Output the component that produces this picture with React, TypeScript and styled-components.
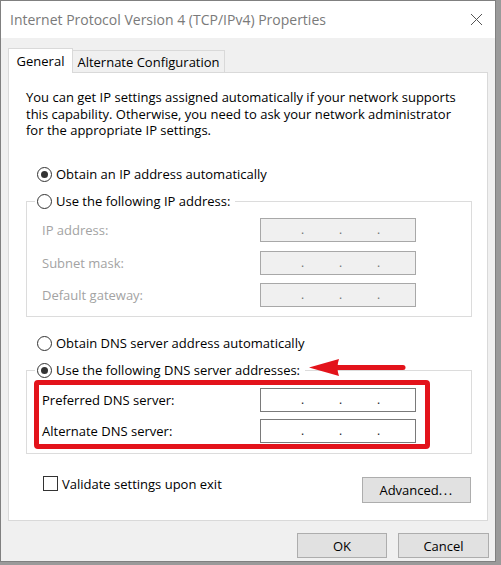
import React from 'react';
import styled, { createGlobalStyle } from 'styled-components';

const GlobalStyle = createGlobalStyle`
  html, body { margin: 0; padding: 0; background: #9a9a9a; }
  body {
    font-family: "Open Sans", "Noto Sans", sans-serif;
    font-size: 13px;
    color: #000;
  }
  * { box-sizing: border-box; }
`;

const Window = styled.div`
  width: 496px;
  height: 562px;
  background: #f0f0f0;
  border: 1px solid #808080;
  display: flex;
  flex-direction: column;
`;

const TitleBar = styled.div`
  height: 37px;
  flex: none;
  background: #fff;
  display: flex;
  align-items: center;
  justify-content: space-between;
  padding: 0 12px 0 9px;
`;

const Title = styled.div`
  font-size: 14px;
  color: #7a7a7a;
`;

const Body = styled.div`
  flex: 1;
  display: flex;
  flex-direction: column;
  padding: 10px 7px 4px 7px;
`;

const TabStrip = styled.div`
  display: flex;
  align-items: flex-end;
  height: 25px;
  margin-bottom: -1px;
  position: relative;
  z-index: 1;
`;

const Tab = styled.div<{ $active?: boolean; $w: number }>`
  width: ${(p) => p.$w}px;
  height: ${(p) => (p.$active ? 25 : 23)}px;
  margin-left: ${(p) => (p.$active ? 0 : -1)}px;
  background: ${(p) => (p.$active ? '#fff' : '#f0f0f0')};
  border: 1px solid #d9d9d9;
  border-bottom: ${(p) => (p.$active ? 'none' : '1px solid #d9d9d9')};
  display: flex;
  align-items: center;
  justify-content: center;
  font-size: 13px;
  color: #000;
  padding-bottom: ${(p) => (p.$active ? 1 : 0)}px;
`;

const Panel = styled.div`
  position: relative;
  background: #fff;
  border: 1px solid #d9d9d9;
  padding: 16px 15px 17px 17px;
  display: flex;
  flex-direction: column;
`;

const Intro = styled.p`
  margin: 0;
  line-height: 16.5px;
`;

const RadioRow = styled.div<{ $mt: number }>`
  display: flex;
  align-items: center;
  gap: 4px;
  height: 17px;
  padding-left: 11px;
  margin-top: ${(p) => p.$mt}px;
`;

const Radio = styled.span<{ $checked?: boolean }>`
  width: 15px;
  height: 15px;
  flex: none;
  border-radius: 50%;
  border: 1px solid #333;
  background: #fff;
  display: grid;
  place-items: center;
  &::after {
    content: '';
    width: 7px;
    height: 7px;
    border-radius: 50%;
    background: ${(p) => (p.$checked ? '#333' : 'transparent')};
  }
`;

const Group = styled.fieldset<{ $pt: number; $pb: number }>`
  margin: 10px 0 0 0;
  padding: ${(p) => p.$pt}px 0 ${(p) => p.$pb}px 15px;
  border: 1px solid #dcdcdc;
  min-width: 0;
`;

const Legend = styled.legend`
  margin-left: -7px;
  padding: 0 5px 0 2px;
  height: 17px;
  display: flex;
  align-items: center;
  gap: 4px;
`;

const Rows = styled.div<{ $gap: number }>`
  display: flex;
  flex-direction: column;
  gap: ${(p) => p.$gap}px;
`;

const FieldRow = styled.div`
  display: grid;
  grid-template-columns: 218px 156px;
  align-items: center;
  height: 24px;
`;

const FieldLabel = styled.span<{ $disabled?: boolean }>`
  color: ${(p) => (p.$disabled ? '#a3a3a3' : '#000')};
`;

const IpBox = styled.div<{ $disabled?: boolean }>`
  height: 24px;
  border: 1px solid ${(p) => (p.$disabled ? '#a8a8a8' : '#7a7a7a')};
  background: ${(p) => (p.$disabled ? '#f0f0f0' : '#fff')};
  display: flex;
  align-items: center;
  justify-content: space-evenly;
  padding-left: 5px;
  color: ${(p) => (p.$disabled ? '#707070' : '#222')};
  font-size: 12px;
`;

const Dot = styled.span`
  line-height: 1;
`;

const BottomRow = styled.div`
  margin-top: 22px;
  display: flex;
  justify-content: space-between;
  align-items: flex-start;
  padding-left: 17px;
  padding-right: 1px;
`;

const CheckLabel = styled.div`
  display: flex;
  align-items: center;
  gap: 4px;
  height: 15px;
`;

const CheckBox = styled.span`
  width: 15px;
  height: 15px;
  border: 1px solid #333;
  background: #fff;
  flex: none;
`;

const Button = styled.button<{ $w: number; $h: number }>`
  width: ${(p) => p.$w}px;
  height: ${(p) => p.$h}px;
  margin-top: 1px;
  background: #e1e1e1;
  border: 1px solid #adadad;
  border-radius: 0;
  font-family: inherit;
  font-size: 13px;
  color: #000;
  padding: 0;
  display: flex;
  align-items: center;
  justify-content: center;
`;

const Ellipsis = styled.span`
  letter-spacing: 1.5px;
`;

const Footer = styled.div`
  margin-top: 11px;
  display: flex;
  justify-content: flex-end;
  gap: 11px;
  margin-right: -1px;
`;

const Highlight = styled.div`
  position: absolute;
  left: 25px;
  top: 307px;
  width: 396px;
  height: 69px;
  border: 5px solid #e3131b;
  border-radius: 4px;
  pointer-events: none;
`;

const ArrowMark = styled.svg`
  position: absolute;
  left: 300px;
  top: 286px;
  width: 97px;
  height: 18px;
  pointer-events: none;
`;

const CloseIcon = () => (
  <svg width="13" height="13" viewBox="0 0 13 13">
    <path d="M1 1 L12 12 M12 1 L1 12" stroke="#555" strokeWidth="1" fill="none" />
  </svg>
);

const IpField = ({ disabled }: { disabled?: boolean }) => (
  <IpBox $disabled={disabled}>
    <Dot>.</Dot>
    <Dot>.</Dot>
    <Dot>.</Dot>
  </IpBox>
);

export default function App() {
  return (
    <>
      <GlobalStyle />
      <Window>
        <TitleBar>
          <Title>Internet Protocol Version 4 (TCP/IPv4) Properties</Title>
          <CloseIcon />
        </TitleBar>
        <Body>
          <TabStrip>
            <Tab $active $w={65}>General</Tab>
            <Tab $w={153}>Alternate Configuration</Tab>
          </TabStrip>
          <Panel>
            <Intro>
              You can get IP settings assigned automatically if your network supports
              <br />
              this capability. Otherwise, you need to ask your network administrator
              <br />
              for the appropriate IP settings.
            </Intro>
            <RadioRow $mt={27}>
              <Radio $checked />
              <span>Obtain an IP address automatically</span>
            </RadioRow>
            <Group $pt={8.5} $pb={9}>
              <Legend>
                <Radio />
                <span>Use the following IP address:</span>
              </Legend>
              <Rows $gap={8.5}>
                <FieldRow>
                  <FieldLabel $disabled>IP address:</FieldLabel>
                  <IpField disabled />
                </FieldRow>
                <FieldRow>
                  <FieldLabel $disabled>Subnet mask:</FieldLabel>
                  <IpField disabled />
                </FieldRow>
                <FieldRow>
                  <FieldLabel $disabled>Default gateway:</FieldLabel>
                  <IpField disabled />
                </FieldRow>
              </Rows>
            </Group>
            <RadioRow $mt={17.5}>
              <Radio />
              <span>Obtain DNS server address automatically</span>
            </RadioRow>
            <Group $pt={9} $pb={10}>
              <Legend>
                <Radio $checked />
                <span>Use the following DNS server addresses:</span>
              </Legend>
              <Rows $gap={7.5}>
                <FieldRow>
                  <FieldLabel>Preferred DNS server:</FieldLabel>
                  <IpField />
                </FieldRow>
                <FieldRow>
                  <FieldLabel>Alternate DNS server:</FieldLabel>
                  <IpField />
                </FieldRow>
              </Rows>
            </Group>
            <BottomRow>
              <CheckLabel>
                <CheckBox />
                <span>Validate settings upon exit</span>
              </CheckLabel>
              <Button $w={109} $h={26}>
                Advanced<Ellipsis>...</Ellipsis>
              </Button>
            </BottomRow>
            <Highlight />
            <ArrowMark viewBox="0 0 97 18">
              <path d="M0 8.5 L30 0 Q27 8.5 30 17 Z" fill="#e3131b" />
              <path d="M26 8.5 L94 8.5" stroke="#e3131b" strokeWidth="5" strokeLinecap="round" />
            </ArrowMark>
          </Panel>
          <Footer>
            <Button $w={90} $h={25}>OK</Button>
            <Button $w={91} $h={25}>Cancel</Button>
          </Footer>
        </Body>
      </Window>
    </>
  );
}
